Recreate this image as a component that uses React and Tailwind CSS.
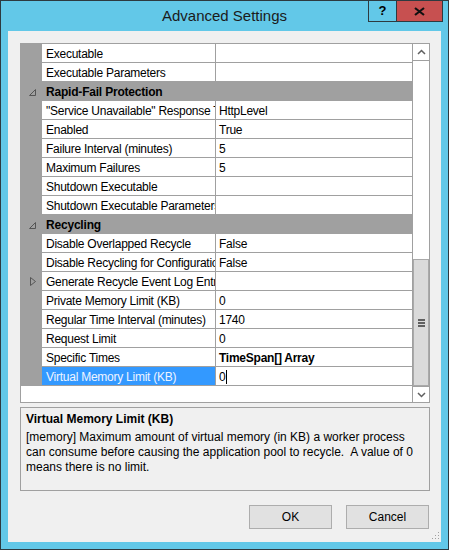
import React from "react";

const FONT = { fontFamily: '"Liberation Sans", Arial, sans-serif' };

const rows = [
  { name: "Executable", value: "" },
  { name: "Executable Parameters", value: "" },
  { cat: "Rapid-Fail Protection" },
  { name: '"Service Unavailable" Response Type', value: "HttpLevel" },
  { name: "Enabled", value: "True" },
  { name: "Failure Interval (minutes)", value: "5" },
  { name: "Maximum Failures", value: "5" },
  { name: "Shutdown Executable", value: "" },
  { name: "Shutdown Executable Parameters", value: "" },
  { cat: "Recycling" },
  { name: "Disable Overlapped Recycle", value: "False" },
  { name: "Disable Recycling for Configuration Changes", value: "False" },
  { name: "Generate Recycle Event Log Entry", value: "", expand: true },
  { name: "Private Memory Limit (KB)", value: "0" },
  { name: "Regular Time Interval (minutes)", value: "1740" },
  { name: "Request Limit", value: "0" },
  { name: "Specific Times", value: "TimeSpan[] Array", bold: true },
  { name: "Virtual Memory Limit (KB)", value: "0", selected: true },
];

function CategoryGlyph() {
  return (
    <svg width="7" height="7" viewBox="0 0 7 7">
      <path d="M6.5 0.5 L6.5 6.5 L0.5 6.5 Z" fill="none" stroke="#555" strokeWidth="1" />
    </svg>
  );
}

function ExpandGlyph() {
  return (
    <svg width="6" height="9" viewBox="0 0 6 9">
      <path d="M0.5 0.5 L5.5 4.5 L0.5 8.5 Z" fill="none" stroke="#555" strokeWidth="1" />
    </svg>
  );
}

function Row({ row }) {
  if (row.cat) {
    return (
      <div className="flex h-[19px] bg-[#a0a0a0] border-b border-[#a0a0a0]">
        <div className="w-[21px] flex items-center justify-end pr-[6px] pt-[2px]">
          <CategoryGlyph />
        </div>
        <div className="pl-[4px] pt-px flex items-center text-[12px] tracking-[-0.2px] font-bold text-black whitespace-nowrap">
          {row.cat}
        </div>
      </div>
    );
  }
  return (
    <div className="flex h-[19px] border-b border-[#a0a0a0]">
      <div className="w-[21px] shrink-0 bg-[#a0a0a0] flex items-center justify-end pr-[6px]">
        {row.expand && <ExpandGlyph />}
      </div>
      <div
        className={`w-[174px] shrink-0 overflow-hidden whitespace-nowrap pl-[4px] pt-px flex items-center text-[12px] tracking-[-0.25px] border-r border-[#a0a0a0] ${
          row.selected ? "bg-[#3399ff] text-[#eef4ff]" : "bg-white text-black"
        }`}
      >
        {row.name}
      </div>
      <div
        className={`flex-1 bg-white overflow-hidden whitespace-nowrap pl-[3px] pt-px flex items-center text-[12px] tracking-[-0.25px] text-black ${
          row.bold ? "font-bold" : ""
        }`}
      >
        {row.value}
        {row.selected && <span className="inline-block w-px h-[14px] bg-black ml-[1px]" />}
      </div>
    </div>
  );
}

export default function App() {
  return (
    <div
      className="w-[449px] h-[550px] bg-[#62c8e8] border border-[#2d3a40] flex flex-col"
      style={FONT}
    >
      <div className="relative h-[30px] shrink-0 flex items-center justify-center">
        <span className="text-[15px] text-[#1b1b1b]">Advanced Settings</span>
        <div className="absolute right-[5px] -top-px flex h-[22px]">
          <div className="w-[29px] border border-[#2d3a40] flex items-center justify-center text-[13px] font-bold text-black">
            ?
          </div>
          <div className="w-[46px] bg-[#c75050] border border-l-0 border-[#2d3a40] flex items-center justify-center">
            <svg width="11" height="9" viewBox="0 0 11 9">
              <path d="M1 1 L10 8 M10 1 L1 8" stroke="#111" strokeWidth="2.2" />
            </svg>
          </div>
        </div>
      </div>
      <div className="mx-[7px] h-[511px] bg-[#f0f0f0] flex flex-col pt-[12px] pl-[12px] pr-[11px] relative">
        <div className="h-[360px] border border-[#a0a0a0] flex bg-white">
          <div className="flex-1 flex flex-col">
            {rows.map((r, i) => (
              <Row key={i} row={r} />
            ))}
          </div>
          <div className="w-[17px] flex flex-col border-l border-[#a0a0a0]">
            <div className="h-[17px] flex items-center justify-center border-b border-[#a0a0a0] bg-white">
              <svg width="9" height="6" viewBox="0 0 9 6">
                <path d="M1 5 L4.5 1.5 L8 5" fill="none" stroke="#606060" strokeWidth="1.5" />
              </svg>
            </div>
            <div className="h-[198px] bg-white" />
            <div className="h-[127px] bg-[#dadada] border border-[#a9a9a9] flex flex-col items-center justify-center gap-[1px]">
              <div className="w-[7px] h-[2px] bg-[#606060]" />
              <div className="w-[7px] h-[2px] bg-[#606060]" />
              <div className="w-[7px] h-[2px] bg-[#606060]" />
            </div>
            <div className="flex-1 flex items-center justify-center bg-white border-t border-[#a0a0a0]">
              <svg width="9" height="6" viewBox="0 0 9 6">
                <path d="M1 1 L4.5 4.5 L8 1" fill="none" stroke="#606060" strokeWidth="1.5" />
              </svg>
            </div>
          </div>
        </div>
        <div className="mt-[4px] h-[84px] border border-[#a0a0a0] px-[5px] pt-[4px] text-[12px] text-black leading-[15px]">
          <div className="font-bold mb-[3px]">Virtual Memory Limit (KB)</div>
          <div>
            [memory] Maximum amount of virtual memory (in KB) a worker process can consume before causing the application pool to recycle.&nbsp; A value of 0 means there is no limit.
          </div>
        </div>
        <div className="mt-[14px] flex justify-end gap-[14px] pr-px">
          <button className="w-[83px] h-[24px] bg-[#e1e1e1] border border-[#adadad] text-[12px] text-black">
            OK
          </button>
          <button className="w-[83px] h-[24px] bg-[#e1e1e1] border border-[#adadad] text-[12px] text-black">
            Cancel
          </button>
        </div>
        <svg className="absolute right-[1px] bottom-[2px]" width="8" height="8" viewBox="0 0 8 8">
          <rect x="6" y="0" width="1" height="1" fill="#a0a0a0" />
          <rect x="3" y="3" width="1" height="1" fill="#a0a0a0" />
          <rect x="6" y="3" width="1" height="1" fill="#a0a0a0" />
          <rect x="0" y="6" width="1" height="1" fill="#a0a0a0" />
          <rect x="3" y="6" width="1" height="1" fill="#a0a0a0" />
          <rect x="6" y="6" width="1" height="1" fill="#a0a0a0" />
        </svg>
      </div>
    </div>
  );
}
